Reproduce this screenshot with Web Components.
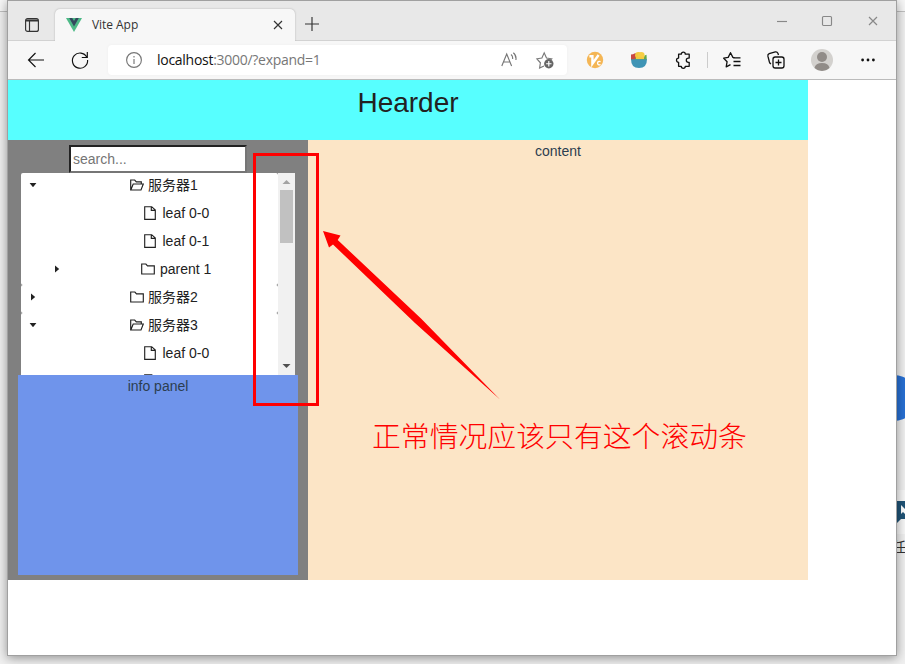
<!DOCTYPE html>
<html lang="zh"><head><meta charset="utf-8"><title>Vite App</title>
<style>
html,body{margin:0;width:905px;height:664px;overflow:hidden;background:#f0f0f0;font-family:"Liberation Sans","Noto Sans CJK SC",sans-serif;font-size:14px}
</style></head><body><desktop-scene></desktop-scene>
<script>
const make=(name,html)=>customElements.define(name,class extends HTMLElement{
  constructor(){super();const t=document.createElement('template');t.innerHTML=html;this.attachShadow({mode:'open'}).append(t.content.cloneNode(true));}
});
const icons={
 tabs:['0 0 14 14','<rect x=".6" y=".6" width="12.8" height="12.8" rx="2"/><path d="M1 3h12M1 2h12M4.5 3v10"/>'],
 vue:['0 0 16 14','<g stroke="none"><path fill="#4dba87" d="M0 0h16L8 14z"/><path fill="#34495e" d="M3.2 0h3L8 3l1.8-3h3L8 8.4z"/></g>'],
 close:['0 0 10 10','<path d="M1 1l8 8M9 1L1 9"/>'],
 plus:['0 0 14 14','<path d="M7 0v14M0 7h14"/>'],
 min:['0 0 12 12','<path d="M1 6.5h10"/>'],
 max:['0 0 12 12','<rect x="1.5" y="1.5" width="9" height="9" rx="1"/>'],
 back:['0 0 18 16','<path d="M17 8H1.5M8.5 1L1.5 8l7 7"/>'],
 reload:['0 0 18 18','<path d="M15.8 6.2A7.6 7.6 0 1 0 16.6 9M16.3 1v5.5h-5.5"/>'],
 info:['0 0 18 18','<circle cx="9" cy="9" r="7.4"/><path d="M9 8v5M9 5v1.5"/>'],
 read:['0 0 16 16','<path d="M.8 14L5.7 2l4.9 12M2.3 10h6.8M10 2.5q2 1.5 1.6 4.5M12.3.8q3.3 2.5 2.6 7.2"/>'],
 addstar:['0 0 18 18','<path d="M8 15l-4.4 2.1.8-5.3L.9 7.8l5-.8L8.2 1.8l2.3 5.2 5.2.8-1 1"/><circle cx="12.8" cy="12.7" r="4.7" fill="#666" stroke="none"/><path stroke="#fff" d="M12.8 10v5.4M10.1 12.7h5.4"/>'],
 orange:['0 0 18 18','<circle cx="9" cy="9" r="8.2" fill="#f4b655" stroke="none"/><path stroke="#fff" stroke-width="2.4" d="M3.4 5.2h3v7.6L12.6 4"/><path stroke="#fff" stroke-width="1.3" d="M14.6 10.6q-3-.8-3 1.6 0 2.1 3 1.4"/>'],
 bowl:['0 0 16 16','<g stroke="none"><path fill="#c94842" d="M0 8V2.6l2-.4L4.5 1 8 8z"/><path fill="#67a94a" d="M12 7l1.5-3.4 2-.8.3 5.2H4V6z"/><circle cx="7.3" cy="3.3" r="3.2" fill="#f4c941"/><circle cx="10.3" cy="3.4" r="3.3" fill="#f6ce45"/><path fill="#f4c941" d="M5 5h8v2.2H5z"/><path fill="#3f94b5" d="M0 7.2h16q0 8.8-8 8.8T0 7.2z"/></g>'],
 puzzle:['0 0 16 18','<path stroke-width="1.3" stroke-linejoin="round" d="M3.6 3.2h2.7a2 2 0 0 1 4 0h3.9v3.9h-.8a2 2 0 0 0 0 4.2h.8v4h-3.9a2 2 0 0 1-4 0H3.6v-4a2.1 2.1 0 0 1 0-4.2z"/>'],
 favs:['0 0 18 18','<path stroke-width="1.3" stroke-linejoin="round" d="M12 6.8l-2.1-.4L7.5 1.7 5.2 6.4l-4.5.8 3.4 3.5-.9 5.2 4.3-2.3M10 6.8h7.5M10.5 10.5h7M10.5 14.5h7"/>'],
 collect:['0 0 18 18','<rect x="6" y="6" width="11" height="11" rx="2.2" stroke-width="1.3"/><path stroke-width="1.3" d="M11.5 8.5v6M8.5 11.5h6M4 13Q2.8 12.4 2.4 11L.9 5.2Q.5 3.4 2.2 2.7L8.3.9q1.8-.4 2.6 1.3l.6 1.8"/>'],
 user:['0 0 22 22','<g stroke="none"><circle cx="11" cy="11" r="11" fill="#d3d1ce"/><circle cx="11" cy="8" r="5" fill="#918c88"/><path fill="#918c88" d="M3.5 19q1-5 7.5-5t7.5 5a11 11 0 0 1-15 0z"/></g>'],
 dots:['0 0 16 16','<g fill="currentColor" stroke="none"><circle cx="2.6" cy="8" r="1.4"/><circle cx="8" cy="8" r="1.4"/><circle cx="13.4" cy="8" r="1.4"/></g>'],
 open:['0 0 14 12','<path d="M2.8 11L.7 11V1h4l1.6 1.8h5V5M.8 11L3.2 5h10.1L11 11z"/>'],
 folder:['0 0 14 12','<path d="M.7 1h4.2l1.6 1.8h6.8V11H.7z"/>'],
 file:['0 0 12 14','<path d="M.7.7h7L11.3 4v9.3H.7zM7.3.8v3.6h3.8"/>'],
 down:['0 0 8 8','<path fill="currentColor" stroke="none" d="M.6 2h6.8L4 6.2z"/>'],
 right:['0 0 8 8','<path fill="currentColor" stroke="none" d="M2 .6v6.8L6.2 4z"/>']
};
customElements.define('ui-icon',class extends HTMLElement{
 constructor(){super();this.attachShadow({mode:'open'});}
 connectedCallback(){const n=this.getAttribute('name');if(!icons[n])return;const [v,p]=icons[n];const [,,w,h]=v.split(' ');
 this.shadowRoot.innerHTML=`<style>:host{display:block;flex:none;width:${w}px;height:${h}px}svg{display:block;overflow:visible}</style><svg viewBox="${v}" width="${w}" height="${h}" fill="none" stroke="currentColor" stroke-width="1.15">${p}</svg>`;}
});
make('title-bar',`<style>
:host{display:flex;height:39px;background:#e8e8e8;border-bottom:1px solid #d2d2d2;color:#333;position:relative;font-family:"Open Sans",sans-serif;font-size:12px}
.tabs{margin:17px 0 0 17px}
.tab{display:flex;align-items:center;width:240px;height:32px;margin:8px 0 -1px 16px;background:#f7f7f7;border-radius:5px 5px 0 0;box-shadow:0 0 2px #aaa;box-sizing:border-box;padding:0 12px 0 11px;clip-path:inset(-3px -3px 0)}
.tab span{margin-left:10px;flex:1;letter-spacing:-.05px;line-height:16px;margin-top:-1px}.plus{margin:16px 0 0 10px}.win{display:flex;margin:14px 18px 0 auto;gap:34px;color:#888}.win ui-icon:first-child{margin-right:-1px;margin-left:-1px}
</style><ui-icon class="tabs" name="tabs"></ui-icon><div class="tab"><ui-icon name="vue"></ui-icon><span>Vite App</span><ui-icon name="close"></ui-icon></div><ui-icon class="plus" name="plus"></ui-icon><div class="win"><ui-icon name="min"></ui-icon><ui-icon name="max" style="margin-right:1px"></ui-icon><ui-icon name="close" style="margin-top:1px"></ui-icon></div>`);
make('tool-bar',`<style>
:host{display:flex;align-items:center;box-sizing:border-box;height:39px;background:#f7f7f7;border-bottom:1px solid #bbb;color:#111;padding:0 19px 0 19px}
.reload{margin-left:26px}.address{display:flex;align-items:center;width:459px;height:30px;box-sizing:border-box;margin-left:19px;padding:0 13px 0 17px;background:#fff;border-radius:4px;color:#777;box-shadow:0 0 3px #eee;font:14px "Open Sans",sans-serif}
.url{margin-left:14px;flex:1;letter-spacing:-.28px;line-height:20px}.url b{font-weight:400;color:#111}.address [name=addstar]{margin-left:19px}
.orange{margin-left:19px}.bowl{margin-left:27px}.puzzle{margin-left:28px}.sep{width:1px;height:16px;background:#ccc;margin-left:16px}.favs{margin-left:15px}.collect{margin-left:26px}.user{margin-left:26px}.dots{margin-left:27px}
</style><ui-icon name="back"></ui-icon><ui-icon class="reload" name="reload"></ui-icon><div class="address"><ui-icon name="info"></ui-icon><span class="url"><b>localhost</b>:3000/?expand=1</span><ui-icon name="read"></ui-icon><ui-icon name="addstar"></ui-icon></div><ui-icon class="orange" name="orange"></ui-icon><ui-icon class="bowl" name="bowl"></ui-icon><ui-icon class="puzzle" name="puzzle"></ui-icon><i class="sep"></i><ui-icon class="favs" name="favs"></ui-icon><ui-icon class="collect" name="collect"></ui-icon><ui-icon class="user" name="user"></ui-icon><ui-icon class="dots" name="dots"></ui-icon>`);
customElements.define('tree-row',class extends HTMLElement{
 constructor(){super();this.attachShadow({mode:'open'});}
 connectedCallback(){const a=n=>this.getAttribute(n)||'';this.shadowRoot.innerHTML=`<style>:host{display:grid;grid-template-columns:${a('start')}px auto 1fr;align-items:center;height:24px;padding-bottom:4px;background:#fff;color:#222;line-height:24px;white-space:nowrap}.caret{padding-left:${a('indent')||8}px}.label{margin-left:${a('gap')||4}px}</style><div class="caret"><ui-icon name="${a('caret')}"></ui-icon></div><ui-icon name="${a('icon')}"></ui-icon><span class="label"><slot></slot></span>`;}
});
make('server-tree',`<style>
:host{display:flex;width:274px;height:202px;background:#808080;overflow:hidden}
.list{width:257px;height:202px;overflow:hidden}.group{border-radius:2px;overflow:hidden}
.bar{display:flex;flex-direction:column;align-items:center;width:17px;background:#f1f1f1;color:#505050}.bar svg{display:block;flex:none}.thumb{width:13px;height:53px;background:#c1c1c1}.grow{flex:1}
</style><div class="list"><div class="group"><tree-row start="109" caret="down" icon="open" gap="4">服务器1</tree-row><tree-row start="123" icon="file" gap="6.5">leaf 0-0</tree-row><tree-row start="123" icon="file" gap="6.5">leaf 0-1</tree-row><tree-row start="120" indent="32" caret="right" icon="folder" gap="5">parent 1</tree-row></div><div class="group"><tree-row start="109" caret="right" icon="folder" gap="4">服务器2</tree-row></div><div class="group"><tree-row start="109" caret="down" icon="open" gap="4">服务器3</tree-row><tree-row start="123" icon="file" gap="6.5">leaf 0-0</tree-row><tree-row start="123" icon="file"></tree-row></div></div>
<div class="bar"><svg width="17" height="17"><path d="M4.5 11h8l-4-4z" fill="#a3a3a3"/></svg><div class="thumb"></div><div class="grow"></div><svg width="17" height="17"><path d="M4.5 6h8l-4 4z" fill="#505050"/></svg></div>`);
make('side-panel',`<style>
:host{display:flex;flex-direction:column;align-items:center;width:300px;height:440px;background:#808080;box-sizing:border-box;padding-top:5px}
input{display:block;flex:none;box-sizing:border-box;width:178px;height:28px;margin:0;padding:1px 2px;border:2px solid;border-color:#222 #767676 #767676 #222;background:#fff;font:14px "Liberation Sans",sans-serif}input::placeholder{color:#757575}
.info{width:280px;height:200px;background:#6f94eb;color:#2c3e50;text-align:center;line-height:22px}
</style><input placeholder="search..."><server-tree></server-tree><div class="info">info panel</div>`);
make('app-page',`<style>
:host{display:block;width:800px}header{height:60px;background:#57ffff;color:#222;text-align:center;font-size:28px;line-height:46px}
.body{display:flex}main{flex:1;background:#fce5c6;color:#2c3e50;text-align:center;line-height:22px}
</style><header>Hearder</header><div class="body"><side-panel></side-panel><main>content</main></div>`);
make('browser-window',`<style>
:host{display:block;width:888px;height:654px;border:1px solid #a0a0a0;background:#fff;box-shadow:0 2px 10px #0006}
</style><title-bar></title-bar><tool-bar></tool-bar><app-page></app-page>`);
make('red-notes',`<style>
:host{position:absolute;inset:0;color:#f00;pointer-events:none}svg{position:absolute;inset:0}
p{position:absolute;left:372px;top:414px;margin:0;font:300 28.85px/42px "Noto Sans CJK SC",sans-serif;white-space:nowrap}
</style><svg width="905" height="664"><rect x="254.5" y="154.5" width="63" height="250" fill="none" stroke="red" stroke-width="3"/><path fill="red" d="M323 231l17.5 4.5-2.8 4.5L421 318.500l79 81-85-76.500L333 244.500l-4 3z"/></svg><p>正常情况应该只有这个滚动条</p>`);
make('desktop-scene',`<style>
:host{display:block;position:relative;width:905px;height:664px;overflow:hidden}
.back{position:absolute;inset:0}.text{position:absolute;left:892px;top:536px;font:14px/20px "Noto Sans CJK SC",sans-serif;color:#333}
browser-window{position:absolute;left:7px;top:0}
</style><svg class="back" width="905" height="664"><path fill="#f7f7f7" d="M0 0h905v11H0zM896 490h9v44h-9z"/><path stroke="#c0c0c0" d="M0 11.5h905"/><circle cx="894" cy="398" r="23" fill="#2870d4"/><path fill="#205477" d="M896 501h9v18h-4l-4 4z"/><path fill="#fff" d="M901 505l4 4v5l-2-2-2 2z"/></svg><span class="text">任</span><browser-window></browser-window><red-notes></red-notes>`);
</script></body></html>
